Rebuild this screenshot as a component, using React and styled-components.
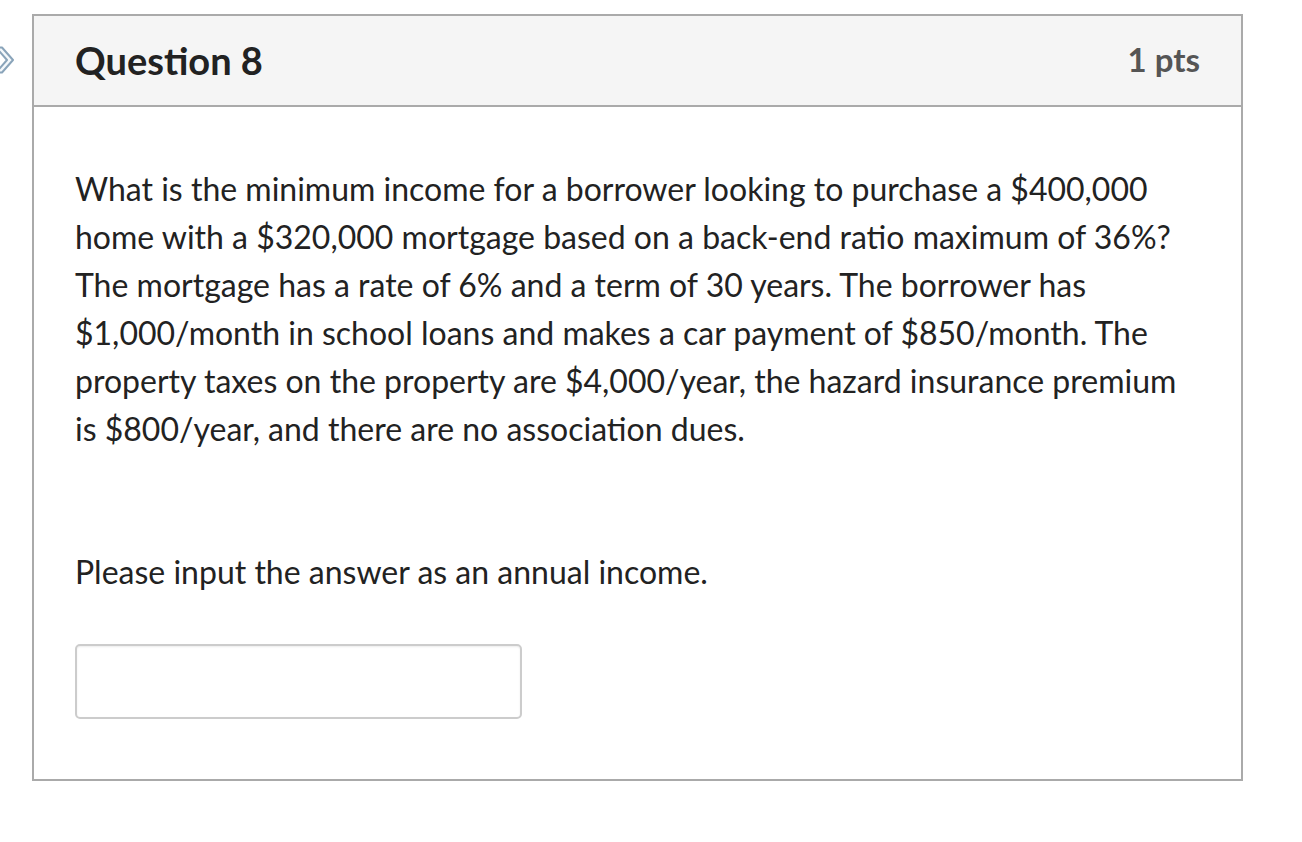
import React from "react";
import styled, { createGlobalStyle } from "styled-components";

const Global = createGlobalStyle`
  html, body { margin: 0; padding: 0; background: #fff; }
  body { font-family: Lato, "Open Sans", sans-serif; color: #222; }
`;

const Page = styled.div`
  position: relative;
  width: 1302px;
  height: 842px;
  padding: 14px 0 0 32px;
  box-sizing: border-box;
`;

const Nav = styled.svg`
  position: absolute;
  left: 0;
  top: 46px;
`;

const Card = styled.section`
  width: 1211px;
  height: 767px;
  box-sizing: border-box;
  border: 2px solid #aaa;
  display: flex;
  flex-direction: column;
`;

const Header = styled.header`
  height: 89px;
  box-sizing: content-box;
  background: #f5f5f5;
  border-bottom: 2px solid #aaa;
  display: flex;
  align-items: center;
  justify-content: space-between;
  padding: 0 41px 0 41px;
`;

const Title = styled.h2`
  margin: 0 0 2px 0;
  font-size: 38px;
  font-weight: 700;
  color: #222;
`;

const Points = styled.span`
  font-size: 33px;
  font-weight: 700;
  color: #555;
  margin-bottom: 4px;
`;

const Body = styled.div`
  padding: 58px 41px 0 41px;
`;

const Para = styled.p`
  margin: 0 0 ${(p) => p.$after || 0}px 0;
  font-size: 32px;
  line-height: 48px;
  color: #222;
`;

const Input = styled.input`
  display: block;
  width: 447px;
  height: 75px;
  box-sizing: border-box;
  border: 2px solid #ccc;
  border-radius: 5px;
  box-shadow: inset 0 1px 2px rgba(0, 0, 0, 0.08);
  background: #fff;
  margin-top: 48px;
  font-size: 28px;
  font-family: inherit;
`;

export default function App() {
  return (
    <>
      <Global />
      <Page>
        <Nav width="16" height="28" viewBox="0 0 16 28">
          <path d="M-4 1.5 L2 1.5 L13 14 L2 26.5 L-4 26.5 L7 14 Z" fill="#f4f8fb" stroke="#8aa4ba" strokeWidth="2" strokeLinejoin="round" />
        </Nav>
        <Card>
          <Header>
            <Title>Question 8</Title>
            <Points>1 pts</Points>
          </Header>
          <Body>
            <Para $after={95}>
              What is the minimum income for a borrower looking to purchase a $400,000 home with a $320,000
              mortgage based on a back-end ratio maximum of 36%? The mortgage has a rate of 6% and a term of 30
              years. The borrower has $1,000/month in school loans and makes a car payment of $850/month. The
              property taxes on the property are $4,000/year, the hazard insurance premium is $800/year, and there
              are no association dues.
            </Para>
            <Para>Please input the answer as an annual income.</Para>
            <Input type="text" aria-label="answer" />
          </Body>
        </Card>
      </Page>
    </>
  );
}
